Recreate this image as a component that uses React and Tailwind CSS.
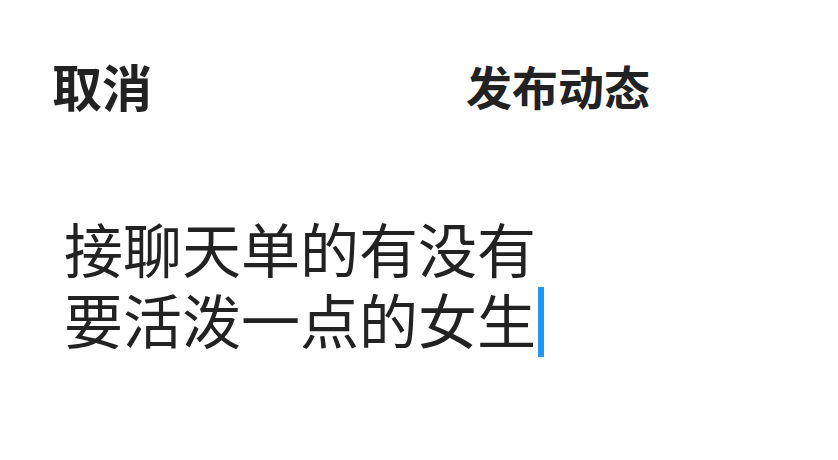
export default function App() {
  return (
    <div
      className="w-[838px] h-[460px] bg-white text-[#222222] overflow-hidden"
      style={{ fontFamily: '"Noto Sans CJK SC", "Noto Sans", sans-serif' }}
    >
      <div className="flex items-center h-[60px] mt-[55px] pl-[52px]">
        <button className="text-[50px] font-bold leading-none">取消</button>
        <div className="ml-[314px] text-[46px] font-bold leading-none">发布动态</div>
      </div>
      <div className="pl-[64px] pt-[100px] text-[59px] leading-[66px]">
        <div>接聊天单的有没有</div>
        <div className="flex items-center">
          <span>要活泼一点的女生</span>
          <span className="w-[6px] h-[70px] bg-[#2196f3] ml-[2px] mt-[6px]" />
        </div>
      </div>
    </div>
  );
}
